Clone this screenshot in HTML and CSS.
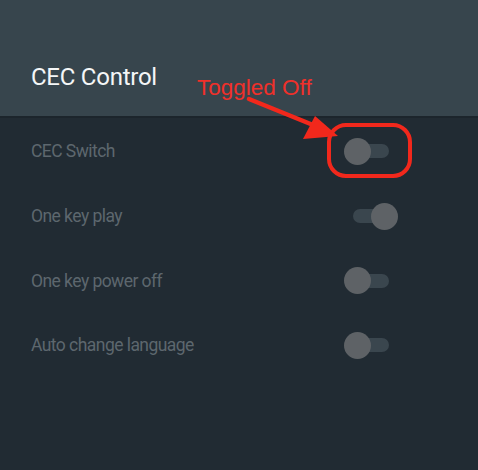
FILE: index.html
```html
<!DOCTYPE html>
<html>
<head>
<meta charset="utf-8">
<link rel="stylesheet" href="styles.css">
</head>
<body>
<div class="screen">
  <header class="header">
    <h1 class="title">CEC Control</h1>
  </header>
  <ul class="list">
    <li class="row"><span class="label">CEC Switch</span><span class="toggle off"><span class="track"></span><span class="knob"></span></span></li>
    <li class="row"><span class="label">One key play</span><span class="toggle on"><span class="track"></span><span class="knob"></span></span></li>
    <li class="row"><span class="label">One key power off</span><span class="toggle off"><span class="track"></span><span class="knob"></span></span></li>
    <li class="row"><span class="label">Auto change language</span><span class="toggle off"><span class="track"></span><span class="knob"></span></span></li>
  </ul>
  <div class="note">Toggled Off</div>
  <svg class="markup" width="478" height="470" viewBox="0 0 478 470">
    <line x1="249" y1="99" x2="318" y2="127" stroke="#f2281c" stroke-width="4.5" stroke-linecap="round"/>
    <polygon points="315,116 303,139 338,136" fill="#f2281c"/>
    <rect x="329" y="125" width="81" height="51" rx="17" ry="17" fill="none" stroke="#f2281c" stroke-width="4"/>
  </svg>
</div>
</body>
</html>
```
FILE: styles.css
```css
html, body {
  margin: 0;
  padding: 0;
  background: #212b33;
}
.screen {
  position: relative;
  width: 478px;
  height: 470px;
  overflow: hidden;
  background: #212b33;
  font-family: Roboto, "Liberation Sans", sans-serif;
}
.header {
  height: 118px;
  background: #37454d;
  border-bottom: 2px solid #1c252c;
  box-sizing: border-box;
  padding: 62px 0 0 31px;
}
.title {
  margin: 0;
  font-weight: 400;
  font-size: 24px;
  line-height: 30px;
  color: #f4f6f7;
  letter-spacing: -0.25px;
}
.list {
  list-style: none;
  margin: 0;
  padding: 1px 0 0 0;
}
.row {
  height: 64.7px;
  display: flex;
  align-items: center;
  justify-content: space-between;
  padding: 0 80px 0 31px;
}
.label {
  font-size: 17.5px;
  color: #5d676e;
  letter-spacing: -0.55px;
}
.toggle {
  position: relative;
  width: 54px;
  height: 27px;
  display: block;
}
.track {
  position: absolute;
  left: 9px;
  right: 9px;
  top: 6.5px;
  height: 14px;
  border-radius: 7px;
  background: #3a464e;
}
.knob {
  position: absolute;
  top: 0;
  width: 27px;
  height: 27px;
  border-radius: 50%;
  background: #5e6266;
}
.toggle.off .knob { left: 0; }
.toggle.on .knob { right: 0; }
.note {
  position: absolute;
  left: 197px;
  top: 75px;
  font-family: "Liberation Sans", Arial, sans-serif;
  font-size: 22.5px;
  line-height: 26px;
  color: #f0302a;
}
.markup {
  position: absolute;
  left: 0;
  top: 0;
}
```
